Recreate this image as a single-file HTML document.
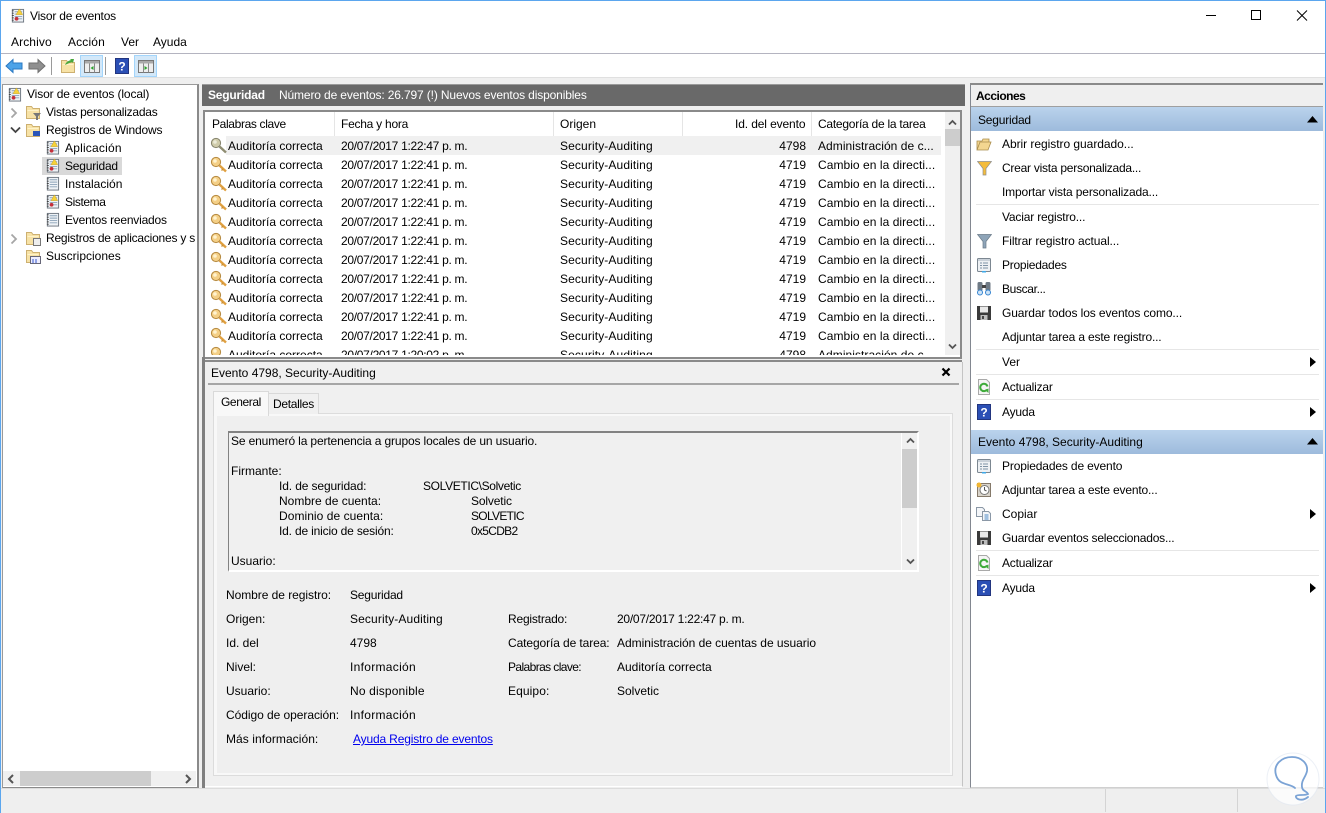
<!DOCTYPE html>
<html><head><meta charset="utf-8"><title>Visor de eventos</title>
<style>
html,body{margin:0;padding:0;background:#fff}
#w{position:relative;width:1326px;height:813px;overflow:hidden;background:#fff;font:12px/18px "Liberation Sans",sans-serif;color:#000}
#w div,#w svg,#w a{position:absolute}
.t{white-space:nowrap;height:18px}
.r{position:absolute;left:0;width:760px;height:19px;line-height:19px}
.r span{position:absolute;white-space:nowrap;top:1px}
.c1{left:23px}.c2{left:136px;letter-spacing:-.3px}.c3{left:355px;letter-spacing:.12px}.c4{right:159px}.c5{left:613px;letter-spacing:.05px}
.r svg{left:5px;top:1px}
.sep{height:1px;background:#e6e6e6;left:976px;width:343px}
.box{background:#efefef}
</style></head><body>
<div id="w">
<svg width="0" height="0" style="left:0;top:0">
<defs>
<symbol id="key" viewBox="0 0 18 18"><circle cx="6" cy="6" r="4.6" fill="#f4cf86" stroke="#b5893f"/><circle cx="5" cy="5" r="1.8" fill="#fff3d0"/><path d="M9.5 9.5L16 15.5" stroke="#e0a040" stroke-width="2.4"/><path d="M13 13l-1.5 1.500" stroke="#c98f35" stroke-width="1.3"/></symbol>
<symbol id="keyg" viewBox="0 0 18 18"><circle cx="6" cy="6" r="4.6" fill="#cfcbaa" stroke="#85836c"/><circle cx="5" cy="5" r="1.8" fill="#ecebd8"/><path d="M9.5 9.5L16 15.5" stroke="#8f8d72" stroke-width="2.4"/></symbol>
<symbol id="log" viewBox="0 0 16 16"><rect x="2.5" y="1.5" width="12" height="13.5" fill="#eef2f6" stroke="#6d7680"/><path d="M2 3h2M2 5.500h2M2 8h2M2 10.500h2M2 13h2" stroke="#444"/><path d="M5 4h8M5 6.500h8M5 9h8M5 11.500h8" stroke="#8ca3b8"/></symbol>
<symbol id="logw" viewBox="0 0 16 16"><use href="#log"/><path d="M10 1l3.500 6h-7z" fill="#f6d23a" stroke="#c9a21e" stroke-width=".5"/><circle cx="7" cy="11.500" r="2" fill="#c5303a"/></symbol>
<symbol id="fold" viewBox="0 0 16 16"><path d="M1.500 14.500V2.500h5l1.500 2h6.500v10z" fill="#f7e2a6" stroke="#cdb070"/><path d="M2.500 6.500h11" stroke="#fff3c8"/></symbol>
<symbol id="help" viewBox="0 0 16 16"><rect x="1.500" y=".5" width="13" height="15" fill="#2b4fb5" stroke="#22357f"/><text x="8" y="12.500" font-size="12" font-weight="bold" text-anchor="middle" fill="#fff" font-family="Liberation Sans">?</text></symbol>
<symbol id="ref" viewBox="0 0 16 16"><path d="M2.500 .5h8l3 3v12h-11z" fill="#f5f5f5" stroke="#a9a9a9"/><path d="M11.500 7.500a3.700 3.700 0 1 0-.5 3" fill="none" stroke="#3eab3a" stroke-width="2"/><path d="M9 11l3.500 3v-4.500z" fill="#3eab3a"/></symbol>
<symbol id="prop" viewBox="0 0 16 16"><rect x="1.500" y="1.500" width="13" height="13" rx="1" fill="#eef1f4" stroke="#7c8791"/><rect x="2" y="2" width="12" height="2" fill="#c9d1d9"/><path d="M4 6h2M7 6h5M4 8.500h2M7 8.500h5M4 11h2M7 11h5" stroke="#7f93a6"/><rect x="6" y="14" width="4" height="1.500" fill="#3fa9e8"/></symbol>
<symbol id="disk" viewBox="0 0 16 16"><path d="M1 1h14v14H1z" fill="#3a3a3a"/><rect x="4" y="1.500" width="8" height="6" fill="#e8e8e8"/><rect x="4.500" y="10" width="7" height="5" fill="#bcbcbc"/><rect x="6" y="11" width="2" height="3" fill="#444"/></symbol>
<symbol id="arr" viewBox="0 0 6 10"><path d="M0 0l6 5-6 5z" fill="#000"/></symbol>
<symbol id="chevr" viewBox="0 0 8 12"><path d="M1.500 1.500L6 6l-4.500 4.500" fill="none" stroke="#a6a6a6" stroke-width="1.800"/></symbol>
</defs>
</svg>

<!-- window border -->
<div style="left:0;top:0;width:1326px;height:1px;background:#5ba6ee"></div>
<div style="left:0;top:0;width:1px;height:813px;background:#5ba6ee"></div>
<div style="left:1325px;top:0;width:1px;height:813px;background:#5ba6ee"></div>
<div style="left:0;top:812px;width:1326px;height:1px;background:#5ba6ee"></div>

<!-- title -->
<svg style="left:10px;top:8px" width="15" height="15"><use href="#logw"/></svg>
<div class="t" style="left:30px;top:7px;letter-spacing:-.2px">Visor de eventos</div>
<svg style="left:1200px;top:0" width="126" height="30" fill="none" stroke="#000">
<path d="M6 15.500h10"/><rect x="51.500" y="10.500" width="9" height="9"/><path d="M97 10.500l10 10M107 10.500l-10 10"/></svg>

<!-- menu -->
<div class="t" style="left:11px;top:33px;letter-spacing:.1px">Archivo</div>
<div class="t" style="left:68px;top:33px;letter-spacing:.15px">Acción</div>
<div class="t" style="left:121px;top:33px">Ver</div>
<div class="t" style="left:153px;top:33px">Ayuda</div>
<div style="left:1px;top:53px;width:1324px;height:1px;background:#b4b4c0"></div>

<!-- toolbar -->
<svg style="left:5px;top:58px" width="18" height="16"><path d="M1 8l7-6.500V5h9v6H8v3.500z" fill="#4da3e8" stroke="#2a78c2"/></svg>
<svg style="left:28px;top:58px" width="18" height="16"><path d="M17 8l-7-6.500V5H1v6h9v3.500z" fill="#8f8f8f" stroke="#6f6f6f"/></svg>
<div style="left:51px;top:57px;width:1px;height:18px;background:#9a9a9a"></div>
<svg style="left:60px;top:58px" width="16" height="16"><use href="#fold"/><path d="M5 7c1-3 3-4 6-5l-1-1 4 0-1 4-1-1c-3 1-5 2-7 3z" fill="#49a83d"/></svg>
<div style="left:80px;top:55px;width:21px;height:20px;background:#d3e8f9;border:1px solid #a3d5fb"></div>
<svg style="left:84px;top:60px" width="16" height="13"><rect x=".5" y=".5" width="15" height="12" fill="#eee" stroke="#777"/><rect x="1" y="1" width="14" height="2.500" fill="#a9a9a9"/><path d="M5.500 3.500v9M10.500 3.500v9" stroke="#888"/><path d="M9.500 6v4l-3-2z" fill="#2ea32e"/></svg>
<div style="left:105px;top:57px;width:1px;height:18px;background:#9a9a9a"></div>
<svg style="left:114px;top:58px" width="16" height="16"><use href="#help"/></svg>
<div style="left:134px;top:55px;width:21px;height:20px;background:#d3e8f9;border:1px solid #a3d5fb"></div>
<svg style="left:138px;top:60px" width="16" height="13"><rect x=".5" y=".5" width="15" height="12" fill="#eee" stroke="#777"/><rect x="1" y="1" width="14" height="2.500" fill="#a9a9a9"/><path d="M5.500 3.500v9M10.500 3.500v9" stroke="#888"/><path d="M6.500 6v4l3-2z" fill="#2ea32e"/></svg>

<!-- body bg -->
<div class="box" style="left:1px;top:77px;width:1324px;height:735px;border-top:1px solid #e0e0e0"></div>

<!-- left pane -->
<div style="left:2px;top:84px;width:194px;height:702px;background:#fff;border:1px solid #9a9a9a;border-right:2px solid #8a8a8a;border-bottom:2px solid #8a8a8a"></div>
<svg style="left:7px;top:87px" width="15" height="15"><use href="#logw"/></svg>
<div class="t" style="left:27px;top:85px;letter-spacing:-.12px">Visor de eventos (local)</div>
<svg style="left:10px;top:107px" width="8" height="12"><use href="#chevr"/></svg>
<svg style="left:25px;top:104px" width="16" height="16"><use href="#fold"/><path d="M8 9h8l-3 3.500V16h-2v-3.500z" fill="#777"/></svg>
<div class="t" style="left:46px;top:103px;letter-spacing:-.24px">Vistas personalizadas</div>
<svg style="left:10px;top:126px" width="11" height="8"><path d="M1 1.500l4.500 4.500L10 1.500" fill="none" stroke="#444" stroke-width="1.800"/></svg>
<svg style="left:25px;top:122px" width="16" height="16"><use href="#fold"/><rect x="8" y="9" width="7" height="5" fill="#2a55b8"/></svg>
<div class="t" style="left:46px;top:121px;letter-spacing:-.15px">Registros de Windows</div>
<div style="left:42px;top:157px;width:80px;height:18px;background:#d9d9d9"></div>
<svg style="left:45px;top:140px" width="15" height="15"><use href="#logw"/></svg>
<div class="t" style="left:65px;top:139px;letter-spacing:.2px">Aplicación</div>
<svg style="left:45px;top:158px" width="15" height="15"><use href="#logw"/></svg>
<div class="t" style="left:65px;top:157px;letter-spacing:-.2px">Seguridad</div>
<svg style="left:45px;top:176px" width="15" height="15"><use href="#log"/></svg>
<div class="t" style="left:65px;top:175px">Instalación</div>
<svg style="left:45px;top:194px" width="15" height="15"><use href="#logw"/></svg>
<div class="t" style="left:65px;top:193px;letter-spacing:-.4px">Sistema</div>
<svg style="left:45px;top:212px" width="15" height="15"><use href="#log"/></svg>
<div class="t" style="left:65px;top:211px;letter-spacing:-.2px">Eventos reenviados</div>
<svg style="left:10px;top:233px" width="8" height="12"><use href="#chevr"/></svg>
<svg style="left:25px;top:230px" width="16" height="16"><use href="#fold"/><rect x="8.500" y="8.500" width="7" height="7" fill="#eee" stroke="#777"/></svg>
<div class="t" style="left:46px;top:229px;width:149px;overflow:hidden;letter-spacing:-.22px">Registros de aplicaciones y servicios</div>
<svg style="left:25px;top:248px" width="16" height="16"><use href="#fold"/><rect x="5.500" y="8.500" width="10" height="7" fill="#eef" stroke="#667"/><path d="M7 12h2M10 12h2M7 14h2M10 14h2" stroke="#35c"/></svg>
<div class="t" style="left:46px;top:247px">Suscripciones</div>
<!-- left scrollbar -->
<div style="left:3px;top:771px;width:193px;height:15px;background:#f0f0f0"></div>
<div style="left:20px;top:771px;width:131px;height:15px;background:#cdcdcd"></div>
<svg style="left:7px;top:774px" width="8" height="10"><path d="M6 1L2 5l4 4" fill="none" stroke="#555" stroke-width="2"/></svg>
<svg style="left:184px;top:774px" width="8" height="10"><path d="M2 1l4 4-4 4" fill="none" stroke="#555" stroke-width="2"/></svg>

<!-- center header -->
<div style="left:202px;top:84px;width:763px;height:22px;background:#696969;border-top:1px solid #9a9a9a;box-sizing:border-box"></div>
<div class="t" style="left:208px;top:86px;color:#fff;font-weight:bold;letter-spacing:-.2px">Seguridad</div>
<div class="t" style="left:279px;top:86px;color:#fff;letter-spacing:-.14px">Número de eventos: 26.797 (!) Nuevos eventos disponibles</div>

<!-- list -->
<div style="left:203px;top:110px;width:755px;height:245px;background:#fff;border:solid #8a8a8a;border-width:2px"></div>
<div style="left:205px;top:112px;width:755px;height:243px;overflow:hidden">
 <div class="t" style="left:7px;top:3px;letter-spacing:-.35px">Palabras clave</div>
 <div class="t" style="left:136px;top:3px;letter-spacing:-.25px">Fecha y hora</div>
 <div class="t" style="left:355px;top:3px">Origen</div>
 <div class="t" style="left:530px;top:3px;letter-spacing:-.12px">Id. del evento</div>
 <div class="t" style="left:613px;top:3px;letter-spacing:-.25px">Categoría de la tarea</div>
 <div style="left:129px;top:0;width:1px;height:24px;background:#e5e5e5"></div>
 <div style="left:348px;top:0;width:1px;height:24px;background:#e5e5e5"></div>
 <div style="left:477px;top:0;width:1px;height:24px;background:#e5e5e5"></div>
 <div style="left:606px;top:0;width:1px;height:24px;background:#e5e5e5"></div>
 <div style="left:21px;top:24px;width:715px;height:19px;background:#f0f0f0"></div>
 <div class="r" style="top:24px"><svg width="18" height="18"><use href="#keyg"/></svg><span class="c1">Auditoría correcta</span><span class="c2">20/07/2017 1:22:47 p. m.</span><span class="c3">Security-Auditing</span><span class="c4">4798</span><span class="c5">Administración de c...</span></div>
 <div class="r" style="top:43px"><svg width="18" height="18"><use href="#key"/></svg><span class="c1">Auditoría correcta</span><span class="c2">20/07/2017 1:22:41 p. m.</span><span class="c3">Security-Auditing</span><span class="c4">4719</span><span class="c5">Cambio en la directi...</span></div>
 <div class="r" style="top:62px"><svg width="18" height="18"><use href="#key"/></svg><span class="c1">Auditoría correcta</span><span class="c2">20/07/2017 1:22:41 p. m.</span><span class="c3">Security-Auditing</span><span class="c4">4719</span><span class="c5">Cambio en la directi...</span></div>
 <div class="r" style="top:81px"><svg width="18" height="18"><use href="#key"/></svg><span class="c1">Auditoría correcta</span><span class="c2">20/07/2017 1:22:41 p. m.</span><span class="c3">Security-Auditing</span><span class="c4">4719</span><span class="c5">Cambio en la directi...</span></div>
 <div class="r" style="top:100px"><svg width="18" height="18"><use href="#key"/></svg><span class="c1">Auditoría correcta</span><span class="c2">20/07/2017 1:22:41 p. m.</span><span class="c3">Security-Auditing</span><span class="c4">4719</span><span class="c5">Cambio en la directi...</span></div>
 <div class="r" style="top:119px"><svg width="18" height="18"><use href="#key"/></svg><span class="c1">Auditoría correcta</span><span class="c2">20/07/2017 1:22:41 p. m.</span><span class="c3">Security-Auditing</span><span class="c4">4719</span><span class="c5">Cambio en la directi...</span></div>
 <div class="r" style="top:138px"><svg width="18" height="18"><use href="#key"/></svg><span class="c1">Auditoría correcta</span><span class="c2">20/07/2017 1:22:41 p. m.</span><span class="c3">Security-Auditing</span><span class="c4">4719</span><span class="c5">Cambio en la directi...</span></div>
 <div class="r" style="top:157px"><svg width="18" height="18"><use href="#key"/></svg><span class="c1">Auditoría correcta</span><span class="c2">20/07/2017 1:22:41 p. m.</span><span class="c3">Security-Auditing</span><span class="c4">4719</span><span class="c5">Cambio en la directi...</span></div>
 <div class="r" style="top:176px"><svg width="18" height="18"><use href="#key"/></svg><span class="c1">Auditoría correcta</span><span class="c2">20/07/2017 1:22:41 p. m.</span><span class="c3">Security-Auditing</span><span class="c4">4719</span><span class="c5">Cambio en la directi...</span></div>
 <div class="r" style="top:195px"><svg width="18" height="18"><use href="#key"/></svg><span class="c1">Auditoría correcta</span><span class="c2">20/07/2017 1:22:41 p. m.</span><span class="c3">Security-Auditing</span><span class="c4">4719</span><span class="c5">Cambio en la directi...</span></div>
 <div class="r" style="top:214px"><svg width="18" height="18"><use href="#key"/></svg><span class="c1">Auditoría correcta</span><span class="c2">20/07/2017 1:22:41 p. m.</span><span class="c3">Security-Auditing</span><span class="c4">4719</span><span class="c5">Cambio en la directi...</span></div>
 <div class="r" style="top:233px"><svg width="18" height="18"><use href="#key"/></svg><span class="c1">Auditoría correcta</span><span class="c2">20/07/2017 1:20:02 p. m.</span><span class="c3">Security-Auditing</span><span class="c4">4798</span><span class="c5">Administración de c...</span></div>
</div>
<!-- list border overlay on right side above scrollbar -->
<div style="left:945px;top:112px;width:15px;height:243px;background:#f0f0f0"></div>
<div style="left:945px;top:129px;width:15px;height:17px;background:#cdcdcd"></div>
<svg style="left:948px;top:119px" width="9" height="7"><path d="M1 5.500l3.500-3.500L8 5.500" fill="none" stroke="#555" stroke-width="1.800"/></svg>
<svg style="left:948px;top:343px" width="9" height="7"><path d="M1 1.500L4.500 5 8 1.500" fill="none" stroke="#555" stroke-width="1.800"/></svg>

<!-- detail pane -->
<div style="left:202px;top:357px;width:3px;height:431px;background:#7f7f7f"></div>
<div style="left:205px;top:360px;width:757px;height:2px;background:#8a8a8a"></div>
<div style="left:205px;top:362px;width:757px;height:424px;background:#f0f0f0;border-bottom:1px solid #fff;border-right:1px solid #c4c4c4"></div>
<div class="t" style="left:211px;top:364px">Evento 4798, Security-Auditing</div>
<div style="left:208px;top:383px;width:751px;height:2px;background:#a6a6a6"></div>
<svg style="left:941px;top:367px" width="10" height="10"><path d="M1.500 1.500l7 7M8.500 1.500l-7 7" stroke="#000" stroke-width="2.200"/></svg>
<!-- tab page -->
<div style="left:213px;top:413px;width:738px;height:361px;background:#f8f8f8;border:1px solid #dcdcdc"></div>
<div style="left:217px;top:416px;width:733px;height:357px;background:#efefef"></div>
<div style="left:268px;top:393px;width:49px;height:20px;background:#f0f0f0;border:1px solid #d9d9d9;border-bottom:0"></div>
<div class="t" style="left:273px;top:395px;letter-spacing:-.3px">Detalles</div>
<div style="left:213px;top:391px;width:54px;height:24px;background:#f8f8f8;border:1px solid #d9d9d9;border-bottom:0"></div>
<div class="t" style="left:221px;top:393px;letter-spacing:-.4px">General</div>
<!-- text box -->
<div style="left:228px;top:431px;width:691px;height:141px;background:#f0f0f0;border-top:2px solid #828282;border-left:1px solid #828282;border-right:2px solid #fff;border-bottom:2px solid #fff;box-sizing:border-box"></div>
<div style="left:901px;top:433px;width:1px;height:137px;background:#fff"></div>
<div style="left:902px;top:449px;width:15px;height:59px;background:#cdcdcd"></div>
<svg style="left:906px;top:437px" width="9" height="7"><path d="M1 5.500l3.500-3.500L8 5.500" fill="none" stroke="#555" stroke-width="1.800"/></svg>
<svg style="left:906px;top:558px" width="9" height="7"><path d="M1 1.500L4.500 5 8 1.500" fill="none" stroke="#555" stroke-width="1.800"/></svg>
<div class="t" style="left:231px;top:432px;letter-spacing:-.14px">Se enumeró la pertenencia a grupos locales de un usuario.</div>
<div class="t" style="left:231px;top:462px">Firmante:</div>
<div class="t" style="left:279px;top:477px;letter-spacing:-.12px">Id. de seguridad:</div><div class="t" style="left:423px;top:477px;letter-spacing:-.35px">SOLVETIC\Solvetic</div>
<div class="t" style="left:279px;top:492px">Nombre de cuenta:</div><div class="t" style="left:471px;top:492px;letter-spacing:-.15px">Solvetic</div>
<div class="t" style="left:279px;top:507px;letter-spacing:.05px">Dominio de cuenta:</div><div class="t" style="left:471px;top:507px;letter-spacing:-.7px">SOLVETIC</div>
<div class="t" style="left:279px;top:522px;letter-spacing:-.17px">Id. de inicio de sesión:</div><div class="t" style="left:471px;top:522px;letter-spacing:-.7px">0x5CDB2</div>
<div class="t" style="left:231px;top:552px">Usuario:</div>
<!-- fields -->
<div class="t" style="left:226px;top:586px;letter-spacing:-.05px">Nombre de registro:</div><div class="t" style="left:350px;top:586px;letter-spacing:-.2px">Seguridad</div>
<div class="t" style="left:226px;top:610px">Origen:</div><div class="t" style="left:350px;top:610px;letter-spacing:.12px">Security-Auditing</div>
<div class="t" style="left:508px;top:610px;letter-spacing:-.2px">Registrado:</div><div class="t" style="left:617px;top:610px;letter-spacing:-.25px">20/07/2017 1:22:47 p. m.</div>
<div class="t" style="left:226px;top:634px">Id. del</div><div class="t" style="left:350px;top:634px">4798</div>
<div class="t" style="left:508px;top:634px;letter-spacing:-.1px">Categoría de tarea:</div><div class="t" style="left:617px;top:634px;letter-spacing:-.03px">Administración de cuentas de usuario</div>
<div class="t" style="left:226px;top:658px">Nivel:</div><div class="t" style="left:350px;top:658px;letter-spacing:.3px">Información</div>
<div class="t" style="left:508px;top:658px;letter-spacing:-.6px">Palabras clave:</div><div class="t" style="left:617px;top:658px">Auditoría correcta</div>
<div class="t" style="left:226px;top:682px">Usuario:</div><div class="t" style="left:350px;top:682px;letter-spacing:.15px">No disponible</div>
<div class="t" style="left:508px;top:682px;letter-spacing:.1px">Equipo:</div><div class="t" style="left:617px;top:682px">Solvetic</div>
<div class="t" style="left:226px;top:706px;letter-spacing:-.05px">Código de operación:</div><div class="t" style="left:350px;top:706px;letter-spacing:.3px">Información</div>
<div class="t" style="left:226px;top:730px;letter-spacing:.06px">Más información:</div>
<a class="t" href="#" style="left:353px;top:730px;color:#0000ee;text-decoration:underline;letter-spacing:-.16px">Ayuda Registro de eventos</a>

<!-- right pane -->
<div style="left:970px;top:84px;width:353px;height:704px;background:#fff;border-left:1px solid #828790;border-bottom:1px solid #d0d0d0;box-sizing:border-box"></div>
<div style="left:970px;top:83px;width:353px;height:2px;background:#8a8a8a"></div>
<div style="left:971px;top:85px;width:352px;height:21px;background:#efefef"></div>
<div class="t" style="left:976px;top:87px;font-weight:bold;letter-spacing:-.5px">Acciones</div>
<div style="left:971px;top:106px;width:352px;height:1px;background:#9f9f9f"></div>
<div style="left:971px;top:107px;width:352px;height:24px;background:linear-gradient(#bad3ec,#9dbbdc)"></div>
<div class="t" style="left:978px;top:111px;letter-spacing:-.2px">Seguridad</div>
<svg style="left:1307px;top:116px" width="11" height="7"><path d="M0 6.500L5.500 0 11 6.500z" fill="#000"/></svg>

<svg style="left:976px;top:137px" width="16" height="14"><path d="M1 13V4h5l1-2h6v3H4L1 13h11l3-8H4" fill="#f3d690" stroke="#a98c4c" stroke-width=".8"/></svg>
<div class="t" style="left:1002px;top:135px;letter-spacing:-.04px">Abrir registro guardado...</div>
<svg style="left:977px;top:161px" width="15" height="15"><path d="M.5.5h14L9 7.500V14H6V7.500z" fill="#f4bc3b" stroke="#8f8f8f" stroke-width=".7"/></svg>
<div class="t" style="left:1002px;top:159px;letter-spacing:-.25px">Crear vista personalizada...</div>
<div class="t" style="left:1002px;top:183px;letter-spacing:-.15px">Importar vista personalizada...</div>
<div class="sep" style="top:204px"></div>
<div class="t" style="left:1002px;top:208px;letter-spacing:-.18px">Vaciar registro...</div>
<svg style="left:977px;top:234px" width="15" height="15"><path d="M.5.5h14L9 7.500V14H6V7.500z" fill="#8ea4b8" stroke="#6a7a88" stroke-width=".7"/></svg>
<div class="t" style="left:1002px;top:232px;letter-spacing:-.08px">Filtrar registro actual...</div>
<svg style="left:976px;top:257px" width="16" height="16"><use href="#prop"/></svg>
<div class="t" style="left:1002px;top:256px;letter-spacing:-.25px">Propiedades</div>
<svg style="left:976px;top:281px" width="16" height="15"><rect x="1.500" y="1" width="5" height="9" rx="1.500" fill="#6f7a85"/><rect x="9.500" y="1" width="5" height="9" rx="1.500" fill="#6f7a85"/><rect x="6" y="4" width="4" height="3" fill="#444"/><circle cx="4" cy="11.500" r="2.500" fill="#cfe4f7" stroke="#3584d0"/><circle cx="12" cy="11.500" r="2.500" fill="#cfe4f7" stroke="#3584d0"/></svg>
<div class="t" style="left:1002px;top:280px;letter-spacing:-.35px">Buscar...</div>
<svg style="left:976px;top:305px" width="16" height="16"><use href="#disk"/></svg>
<div class="t" style="left:1002px;top:304px;letter-spacing:-.1px">Guardar todos los eventos como...</div>
<div class="t" style="left:1002px;top:328px;letter-spacing:-.16px">Adjuntar tarea a este registro...</div>
<div class="sep" style="top:349px"></div>
<div class="t" style="left:1002px;top:353px">Ver</div>
<svg style="left:1310px;top:357px" width="6" height="10"><use href="#arr"/></svg>
<div class="sep" style="top:374px"></div>
<svg style="left:976px;top:379px" width="16" height="16"><use href="#ref"/></svg>
<div class="t" style="left:1002px;top:378px;letter-spacing:-.2px">Actualizar</div>
<div class="sep" style="top:399px"></div>
<svg style="left:976px;top:404px" width="16" height="16"><use href="#help"/></svg>
<div class="t" style="left:1002px;top:403px;letter-spacing:-.2px">Ayuda</div>
<svg style="left:1310px;top:407px" width="6" height="10"><use href="#arr"/></svg>

<div style="left:971px;top:430px;width:352px;height:24px;background:linear-gradient(#bad3ec,#9dbbdc)"></div>
<div class="t" style="left:978px;top:433px">Evento 4798, Security-Auditing</div>
<svg style="left:1307px;top:438px" width="11" height="7"><path d="M0 6.500L5.500 0 11 6.500z" fill="#000"/></svg>

<svg style="left:976px;top:458px" width="16" height="16"><use href="#prop"/></svg>
<div class="t" style="left:1002px;top:457px;letter-spacing:-.15px">Propiedades de evento</div>
<svg style="left:976px;top:482px" width="16" height="16"><rect x="1.500" y="1.500" width="13" height="13" fill="#d9d4cb" stroke="#85796a"/><circle cx="8.500" cy="8" r="4.500" fill="#fff" stroke="#777"/><path d="M8.500 5v3l2 1" fill="none" stroke="#555"/><circle cx="3" cy="3" r="2.500" fill="#f2b632"/></svg>
<div class="t" style="left:1002px;top:481px;letter-spacing:-.17px">Adjuntar tarea a este evento...</div>
<svg style="left:976px;top:506px" width="16" height="16"><path d="M.5 1.500h6l2 2v7h-8z" fill="#f4f6f9" stroke="#8b98a6"/><path d="M6.500 5.500h6l2 2v7h-8z" fill="#f4f6f9" stroke="#8b98a6"/><path d="M8.500 9h4M8.500 11h4M8.500 13h4" stroke="#4d8bc7"/></svg>
<div class="t" style="left:1002px;top:505px">Copiar</div>
<svg style="left:1310px;top:509px" width="6" height="10"><use href="#arr"/></svg>
<svg style="left:976px;top:530px" width="16" height="16"><use href="#disk"/></svg>
<div class="t" style="left:1002px;top:529px;letter-spacing:-.2px">Guardar eventos seleccionados...</div>
<div class="sep" style="top:550px"></div>
<svg style="left:976px;top:555px" width="16" height="16"><use href="#ref"/></svg>
<div class="t" style="left:1002px;top:554px;letter-spacing:-.2px">Actualizar</div>
<div class="sep" style="top:575px"></div>
<svg style="left:976px;top:580px" width="16" height="16"><use href="#help"/></svg>
<div class="t" style="left:1002px;top:579px;letter-spacing:-.2px">Ayuda</div>
<svg style="left:1310px;top:583px" width="6" height="10"><use href="#arr"/></svg>

<!-- status bar -->
<div style="left:1px;top:788px;width:1324px;height:24px;background:#efefef;border-top:1px solid #dcdcdc;box-sizing:border-box"></div>
<div style="left:1105px;top:789px;width:1px;height:23px;background:#d4d4d4"></div>
<div style="left:1237px;top:789px;width:1px;height:23px;background:#d4d4d4"></div>

<!-- watermark -->
<svg style="left:1264px;top:750px" width="60" height="60">
<circle cx="29" cy="29" r="26" fill="#fff" fill-opacity=".72" stroke="#dfe6f0" stroke-opacity=".6"/>
<path d="M31 38C26 33 15 36 12 25C9 15 17 7 28 7C38 7 44 14 43 21C42 27 37 30 38 37C38 41 43 41 44 44C40 46 34 44 32 46C31 49 38 52 44 47" fill="none" stroke="#7ba3d5" stroke-width="1.800" stroke-linecap="round"/>
</svg>
</div>
</body></html>
